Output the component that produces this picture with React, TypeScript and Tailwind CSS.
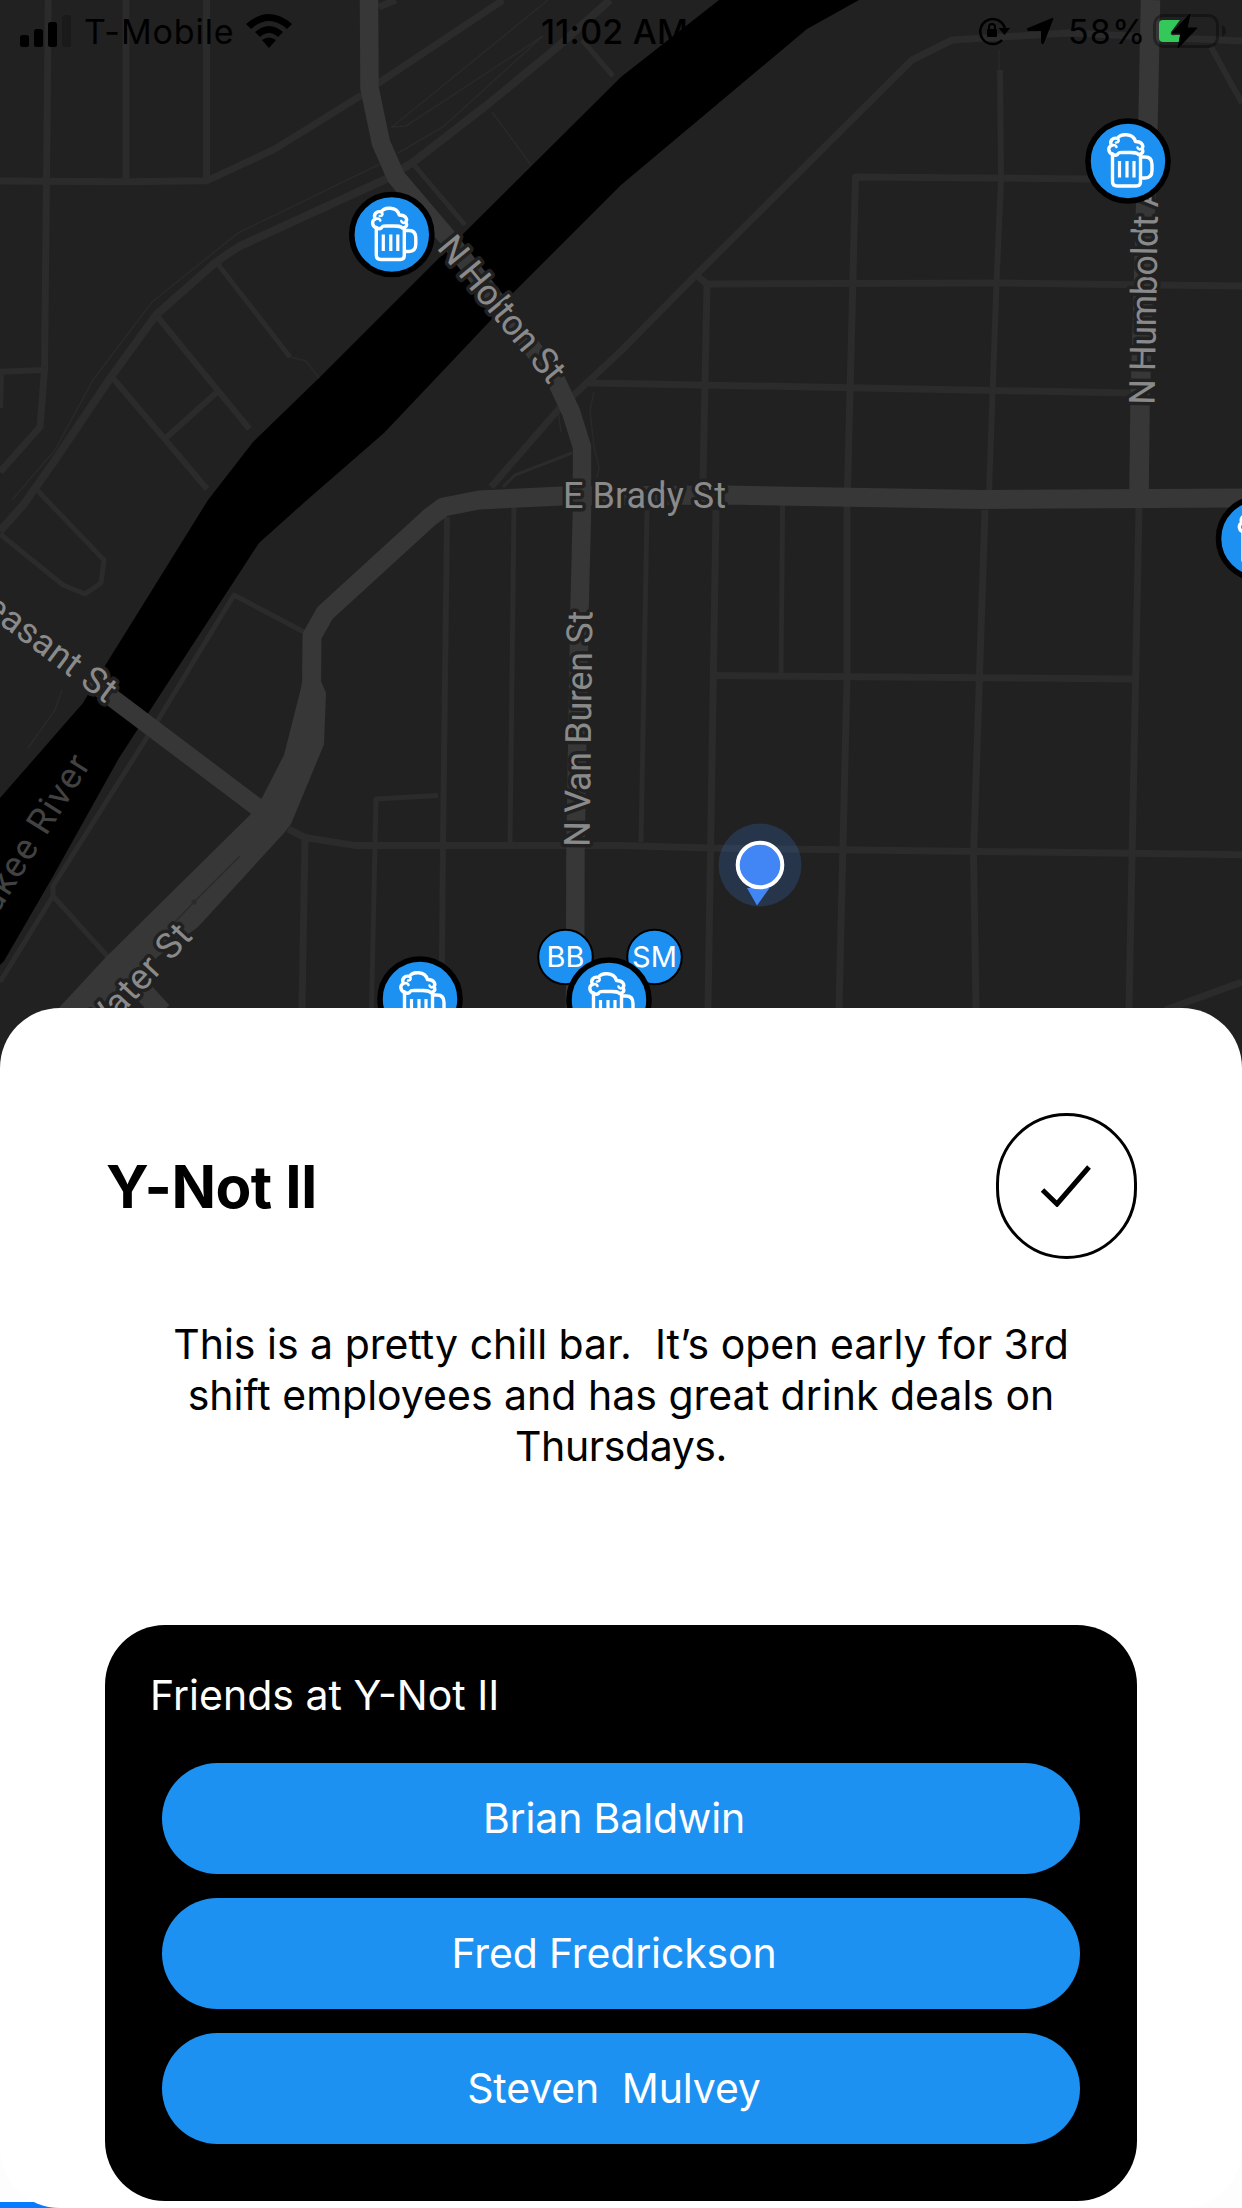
import React from "react";

const minorRoads: [string, number][] = [
  ["M48.3 0L46.5 180L44.5 370L40 427L0 472", 7],
  ["M126 0V181", 7],
  ["M206.500 0V181", 7],
  ["M0 181L127 181.700L207 180.700L273 150L362 95M377 84L503 0M379 7L396 0", 7],
  ["M610 0L554 50L487 105L412 163L384 180L238 247L216 262L156 315L111 377L53 463L24 504L0 531", 8],
  ["M37 490L104 560L101 583L85 594L63 585L0 534", 5],
  ["M217 263L290 357", 5],
  ["M156 315L249.500 429M112 377L207 489M216 393L167 437", 6],
  ["M0 371.700L44 370M1 372L0 408", 6],
  ["M414 165L465 225M582 40L613 76", 5],
  ["M491 487L558 410L576 393L621 351L696 275L912 60L952 40L1068 33L1242 41", 7],
  ["M585 383L621 383.500L1132 393", 7],
  ["M572 453L515 475L503 487", 3],
  ["M696 275L707 284L1001 283L1242 286M707 284L703 480", 7],
  ["M1092 179L855.500 177L847.500 490", 7],
  ["M1000 70L1001 180L996.500 283L989 492", 6],
  ["M1211 47L1242 103", 6],
  ["M158 720L234 595L305 632.500M158 720L53 886V896L0 982M53 896L109 958", 5],
  ["M447 517L443 844L441.500 1008", 6],
  ["M514 505L510 844M438 795.500L376 799L371.500 1008", 5],
  ["M288 829L305 837.500L354.500 845.400H621L708 848L1242 854.700M305 838L302 1008", 7],
  ["M647 510L641 842M782.600 505L781 675", 5],
  ["M716 510L708 1008M847 505V679L839 1008M985 510L973.500 855L976 1008M1139 508L1129 1008", 7],
  ["M716 675.600L1132 679M1242 982L1165 1010", 7],
];

const footPaths =
  "M548 0L392 127L406 126L543 36M543 36L443 127L398 153M380 164L238 233L152 302L93 380L55 450L12 500M492 112L531 165M290 357L306 361L319 378M999 50V70M594 392L590 410L594 447L599 467L595 487M62 690L55 710L28 748M558 410L561 432";

const majorRoads: [string, number][] = [
  ["M369 0L369.500 88L381 143L396 177L447 237L555 378L571 412L582 447V510L579.500 610L575.500 848L575 1008", 18.500],
  ["M1150.500 0L1148 123L1140 407L1139 495", 19.500],
  ["M1242 498L983 499.500L726 495L562 496L479 500L443.500 507L430 517L325 613L312 636L311.500 690", 19],
  ["M90 680L115 700L265 813", 18],
];

function Label({
  x,
  y,
  rotate,
  width,
  children,
}: {
  x: number;
  y: number;
  rotate: number;
  width: number;
  children: string;
}) {
  return (
    <text
      transform={`translate(${x} ${y}) rotate(${rotate})`}
      textLength={width}
      fill="#8a8a8a"
      stroke="#212121"
      strokeWidth={7}
      strokeLinejoin="round"
      paintOrder="stroke"
      fontSize={36}
      className="font-['Roboto',sans-serif]"
    >
      {children}
    </text>
  );
}

function BeerPin({ x, y }: { x: number; y: number }) {
  return (
    <g transform={`translate(${x} ${y})`}>
      <circle r="40" fill="#1c91f2" stroke="#000" strokeWidth="5.600" />
      <g fill="none" stroke="#fff" strokeWidth="3.400" strokeLinejoin="round" strokeLinecap="round">
        <path d="M-15.500 -7V20.500Q-15.500 25 -11 25H8.500Q12.500 25 12.500 21V-7" />
        <path d="M-15 -6.500C-20 -8 -20.500 -14 -16.500 -15.500C-19 -20 -15 -24 -10.500 -22.500C-8 -27.500 5 -28.500 7.500 -19.500C14 -19.500 16 -15 14 -12.500C16 -9 14 -6.500 10.500 -6.500C8 -9 6 -8.500 -1 -8.500S-9 -9 -10.500 -6.500C-12 -5.500 -13.500 -5.500 -15 -6.500Z" />
        <path d="M-16.500 -15.500C-14 -16.500 -12 -15.500 -11.500 -14M-10.500 -22.500C-8.500 -21 -9 -18.500 -12 -18.500M14 -12.500C12 -11 10 -11.500 9.500 -13.500" strokeWidth="2.600" />
        <path d="M13.500 -4H17Q24 -4 24 3.500V9.500Q24 17 17 17H13.500" />
        <path d="M-8.500 0V16.500M-1 0V16.500M6 0V16.500" strokeWidth="3.200" strokeLinecap="butt" />
      </g>
    </g>
  );
}

function FriendPin({ x, y, initials }: { x: number; y: number; initials: string }) {
  return (
    <g transform={`translate(${x} ${y})`}>
      <circle r="27.300" fill="#1c91f2" stroke="#000" strokeWidth="2" />
      <text
        y="10"
        textAnchor="middle"
        fontSize="29"
        fill="#fff"
        className="font-['Inter',sans-serif]"
      >
        {initials}
      </text>
    </g>
  );
}

function CityMap() {
  return (
    <svg viewBox="0 0 1242 1100" className="block h-[1100px] w-[1242px]">
      <rect width="1242" height="1100" fill="#212121" />
      <path
        d="M719 0L621 77L467 230L319 378L253 442L208 500L103 669L83 703L0 798V965L4 961L51.500 879L119 758L259 543L307 500L384 433L491 320L511 295L621 185L807 29L859 0Z"
        fill="#000"
      />
      <path d={footPaths} fill="none" stroke="#292929" strokeWidth="1.500" />
      <g fill="none" stroke="#2b2b2b" strokeLinejoin="round">
        {minorRoads.map(([d, w]) => (
          <path key={d} d={d} strokeWidth={w} />
        ))}
      </g>
      <g fill="none" stroke="#373737" strokeLinejoin="round">
        {majorRoads.map(([d, w]) => (
          <path key={d} d={d} strokeWidth={w} />
        ))}
      </g>
      <path
        d="M302 682L301 688L284 755L263 796L253 812L107 956L55 1012H92L160 955L198 927L285 832L291 824L324 744.500L326 693L321 681Z"
        fill="#373737"
      />
      <path d="M142 990L162 1012" stroke="#373737" strokeWidth="20" />
      <path d="M240 856L194 902L175 922" stroke="#2b2b2b" strokeWidth="1.500" fill="none" />
      <circle cx="194" cy="902" r="2.500" fill="#2b2b2b" />

      <g stroke="#8a8a8a">
        <Label x={436} y={248} rotate={50.5} width={178}>N Holton St</Label>
        <Label x={1154.5} y={405} rotate={-89} width={221}>N Humboldt A</Label>
        <Label x={563} y={507.5} rotate={0} width={163}>E Brady St</Label>
        <Label x={589.5} y={847} rotate={-89.3} width={236}>N Van Buren St</Label>
        <Label x={-43} y={592} rotate={37} width={186}>Pleasant St</Label>
        <Label x={97} y={1041} rotate={-47} width={142}>Water St</Label>
      </g>
      <text
        transform="translate(92 763) rotate(-58)"
        textAnchor="end"
        fontSize="36"
        letterSpacing="1.500"
        fill="#424242"
        className="font-['Roboto',sans-serif]"
      >
        Milwaukee River
      </text>

      <circle cx="760" cy="865" r="41.500" fill="#4285f4" fillOpacity="0.200" />
      <path d="M747 888H769.500L757 905.600Z" fill="#4285f4" />
      <circle cx="760" cy="865" r="22.300" fill="#4285f4" stroke="#fff" strokeWidth="4" />

      <BeerPin x={391.8} y={234.5} />
      <BeerPin x={1128} y={161} />
      <BeerPin x={1258.5} y={538.5} />
      <BeerPin x={420} y={999} />
      <FriendPin x={565.5} y={957} initials="BB" />
      <FriendPin x={654.5} y={957} initials="SM" />
      <BeerPin x={609} y={1000} />
    </svg>
  );
}

function StatusBar() {
  return (
    <header className="absolute inset-x-0 top-0 flex h-[62px] items-center justify-between pl-5 pr-[15px] text-[34px] text-black">
      <div className="flex items-center">
        <svg viewBox="0 0 52 32" className="h-8 w-[52px]">
          <rect x="0" y="20" width="9" height="12" rx="2.500" />
          <rect x="14" y="14" width="9" height="18" rx="2.500" />
          <rect x="28" y="7" width="9" height="25" rx="2.500" />
          <rect x="42" y="0" width="9" height="32" rx="2.500" fillOpacity="0.200" />
        </svg>
        <span className="ml-3 w-[150px] whitespace-nowrap tracking-[0.9px]">T-Mobile</span>
        <svg viewBox="0 0 46 34" className="ml-3 h-[34px] w-[46px]">
          <path d="M0 10Q23 -10 46 10L41 15Q23 -1 5 15Z" />
          <path d="M9 18Q23 6 37 18L32 23Q23 15 14 23Z" />
          <path d="M16 26Q23 21 30 26L23 34Z" />
        </svg>
      </div>
      <span className="absolute left-[541px] whitespace-nowrap font-medium tracking-[0.2px]">11:02 AM</span>
      <div className="flex items-center">
        <svg viewBox="0 0 32 30" className="h-[30px] w-8" fill="none" stroke="#000" strokeWidth="2.500">
          <path d="M24 24A12.500 12.500 0 1 1 27 13" />
          <path d="M20.500 12H32L26.500 19Z" fill="#000" stroke="none" />
          <path d="M11 14V11Q11 8 14 8T17 11V14" strokeWidth="2" />
          <rect x="9" y="13" width="10" height="8" rx="1" fill="#000" stroke="none" />
        </svg>
        <svg viewBox="0 0 28 28" className="ml-4 h-7 w-7">
          <path d="M26 1Q28 0 27 3L18 26Q16 29 15 25V14L3 14Q-1 13 2 11Z" />
        </svg>
        <span className="ml-[14px] w-[77px] whitespace-nowrap tracking-[1.2px]">58%</span>
        <svg viewBox="0 0 74 36" className="ml-2 h-9 w-[74px]">
          <rect x="1.500" y="2.500" width="63" height="31" rx="9" fill="none" stroke="#000" strokeOpacity="0.350" strokeWidth="3" />
          <path d="M69 12Q73 14 73 18T69 24Z" fillOpacity="0.350" />
          <path d="M10 7H27L18 19Q17 23 22 22H27L26 29H10Q6 29 6 25V11Q6 7 10 7Z" fill="#34c759" />
          <path d="M37 1L19 20H28L25 35L44 15H34Z" stroke="#000" />
        </svg>
      </div>
    </header>
  );
}

function FriendButton({ name }: { name: string }) {
  return (
    <button className="h-[111px] w-full whitespace-pre rounded-[56px] bg-[#1c91f2] pr-[14px] text-[41px] tracking-[-0.15px] text-white">
      {name}
    </button>
  );
}

export default function App() {
  return (
    <div className="relative h-[2208px] w-[1242px] overflow-hidden bg-[#fdfdfd] font-['Inter',sans-serif]">
      <CityMap />
      <StatusBar />
      <div className="absolute bottom-0 left-0 h-[6px] w-[80px] bg-[#087aff]" />
      <main className="absolute inset-x-0 top-[1008px] flex h-[1200px] flex-col rounded-[60px] bg-white px-[105px] pt-[105px]">
        <div className="flex h-[146px] items-center justify-between">
          <h1 className="whitespace-nowrap pl-px pt-[2px] text-[58.500px] font-bold leading-none tracking-[-0.5px]">Y-Not II</h1>
          <div className="flex h-[146px] w-[141px] items-center justify-center rounded-full border-[3px] border-black">
            <svg viewBox="0 0 50 42" className="mr-[2px] h-[42px] w-[50px]" fill="none" stroke="#000" strokeWidth="5">
              <path d="M1.500 25L16 39L48 2" />
            </svg>
          </div>
        </div>
        <p className="mt-[60px] whitespace-pre text-center text-[41px] leading-[51px]">
          {"This is a pretty chill bar.  It’s open early for 3rd\nshift employees and has great drink deals on\n"}
          <span className="tracking-[-0.4px]">Thursdays.</span>
        </p>
        <section className="mt-[153px] h-[576px] w-[1032px] shrink-0 rounded-[60px] bg-black px-[57px]">
          <h2 className="-ml-3 pt-[45px] text-[41px] leading-[51px] text-white">Friends at Y-Not II</h2>
          <div className="mt-[42px] flex flex-col gap-6">
            <FriendButton name="Brian Baldwin" />
            <FriendButton name="Fred Fredrickson" />
            <FriendButton name="Steven  Mulvey" />
          </div>
        </section>
      </main>
    </div>
  );
}
